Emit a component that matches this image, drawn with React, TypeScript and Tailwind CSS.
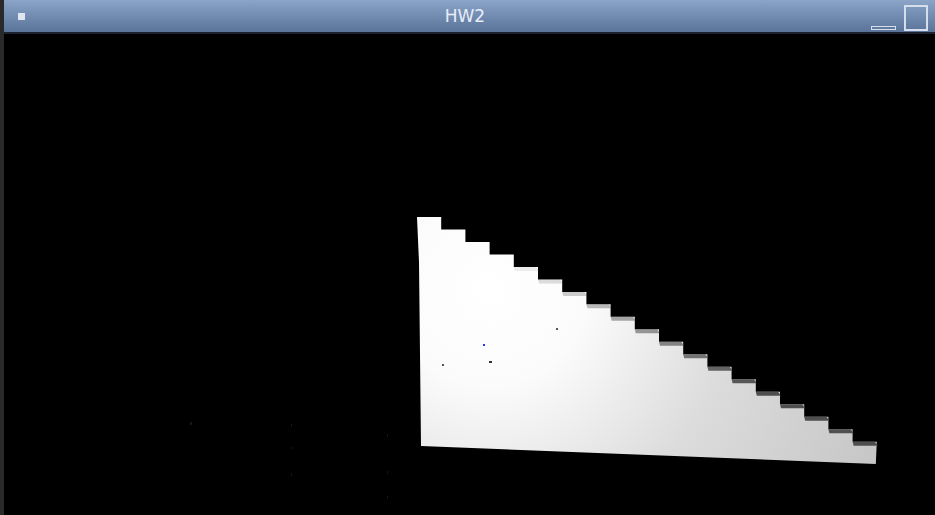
const STEPS = 19;
const X0 = 417;
const Y0 = 217;
const DX = 24.2;
const DY = 12.48;

// stepped outline of the lit triangle, in page coordinates
function outline() {
  const pts: string[] = [`${X0},${Y0}`];
  for (let i = 1; i < STEPS; i++) {
    const x = X0 + DX * i;
    pts.push(`${x},${Y0 + DY * (i - 1)}`);
    pts.push(`${x},${Y0 + DY * i}`);
  }
  const xEnd = X0 + DX * STEPS;
  pts.push(`${xEnd},${Y0 + DY * (STEPS - 1)}`);
  pts.push(`${xEnd - 1},464`);
  pts.push(`421,446`);
  pts.push(`419,262`);
  return pts.join(" ");
}

function StepEdges() {
  const bands = [];
  for (let i = 4; i < STEPS; i++) {
    const x = X0 + DX * i;
    const y = Y0 + DY * i;
    const o = Math.min(0.95, (i - 3) * 0.09);
    bands.push(
      <polygon
        key={i}
        points={`${x},${y} ${x + DX - 2},${y} ${x + DX + 1},${y + 4} ${x + 1},${y + 4}`}
        fill="#484848"
        style={{ opacity: o }}
      />
    );
  }
  return <>{bands}</>;
}

export default function App() {
  return (
    <div className="flex h-[515px] w-[935px] flex-col overflow-hidden border-l-4 border-[#2a2a2a] bg-black">
      {/* title bar */}
      <div className="flex h-[34px] shrink-0 items-center border-b-2 border-[#1c2230] bg-gradient-to-b from-[#8ba4c8] to-[#5a7399]">
        <div className="flex w-[66px] items-center">
          <div className="ml-[14px] h-[7px] w-[7px] bg-[#dfe6f2]" />
        </div>
        <div
          className="flex-1 text-center text-[17px] leading-none text-[#e8eef8]"
          style={{ fontFamily: '"DejaVu Sans", sans-serif' }}
        >
          HW2
        </div>
        <div className="flex w-[75px] items-end justify-end gap-[8px] self-stretch pb-[1px] pr-[7px] pt-[5px]">
          <div className="mb-[1px] h-[4px] w-[25px] border border-[#d6deec]" />
          <div className="h-full w-[24px] border-2 border-[#d6deec]" />
        </div>
      </div>

      {/* render area */}
      <svg className="block" width="931" height="481" viewBox="4 34 931 481">
        <defs>
          <radialGradient id="lit" cx="490" cy="290" r="440" gradientUnits="userSpaceOnUse">
            <stop offset="0" stopColor="#ffffff" />
            <stop offset="0.22" stopColor="#fbfbfb" />
            <stop offset="0.55" stopColor="#dcdcdc" />
            <stop offset="1" stopColor="#c4c4c4" />
          </radialGradient>
        </defs>
        <polygon points={outline()} fill="url(#lit)" />
        <StepEdges />
        <rect x="556" y="328" width="2" height="2" fill="#555" />
        <rect x="483" y="344" width="2" height="2" fill="#3030ff" />
        <rect x="489" y="361" width="3" height="2" fill="#333" />
        <rect x="442" y="364" width="2" height="2" fill="#555" />
        <rect x="190" y="422" width="2" height="3" fill="#161616" />
        <rect x="291" y="424" width="1" height="3" fill="#141414" />
        <rect x="291" y="447" width="1" height="2" fill="#141414" />
        <rect x="291" y="473" width="1" height="3" fill="#141414" />
        <rect x="387" y="434" width="1" height="3" fill="#141414" />
        <rect x="387" y="471" width="1" height="3" fill="#141414" />
        <rect x="387" y="496" width="1" height="3" fill="#141414" />
      </svg>
    </div>
  );
}
